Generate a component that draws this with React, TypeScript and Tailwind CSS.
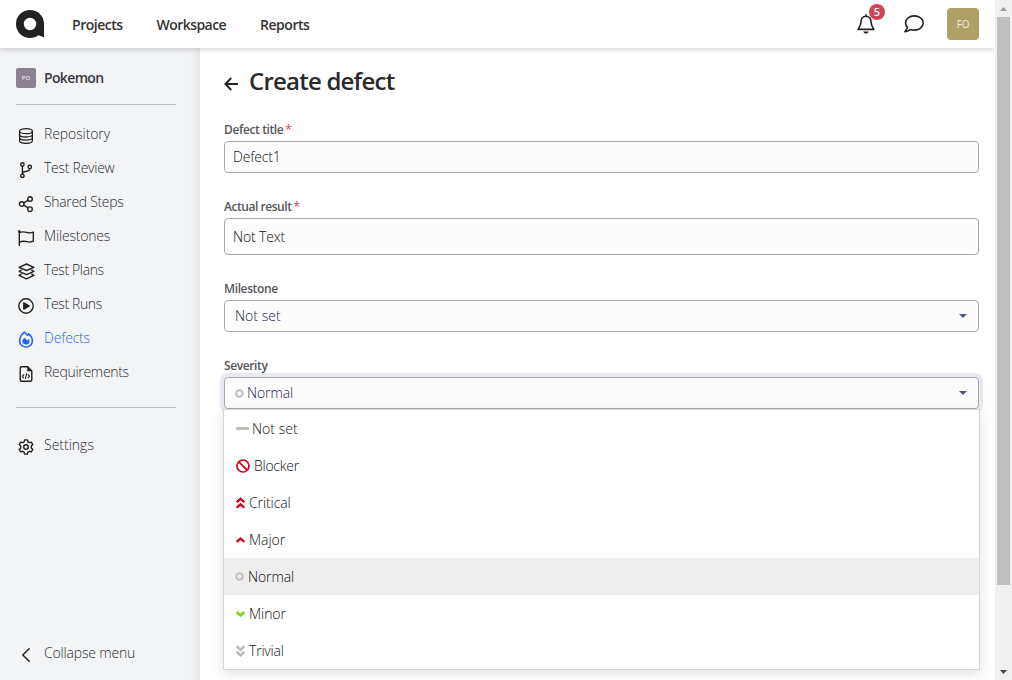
import React from "react";

type IconProps = { className?: string };

const stroke = {
  fill: "none",
  stroke: "currentColor",
  strokeWidth: 1.4,
  strokeLinecap: "round" as const,
  strokeLinejoin: "round" as const,
};

const Logo = () => (
  <svg width="28" height="28" viewBox="0 0 28 28">
    <path
      fill="#222"
      fillRule="evenodd"
      d="M14 0C21.8 0 28 6 28 13.8V27.2L22.4 25.2C20 27 17 28 14 28A14 14 0 0 1 14 0ZM14 7.8A6.2 6.2 0 1 0 14 20.2A6.2 6.2 0 0 0 14 7.8Z"
    />
  </svg>
);

const Bell = () => (
  <svg width="18" height="20" viewBox="0 0 18 20" {...stroke} strokeWidth={1.6}>
    <path d="M9 .8V2.5M9 2.3C5.8 2.3 4 4.6 4 7.6C4 11.5 2.6 13 1.1 15.4H16.9C15.4 13 14 11.5 14 7.6C14 4.6 12.2 2.3 9 2.3Z" />
    <path d="M6.5 17.4H11.5C11.3 18.8 10.2 19.5 9 19.5S6.7 18.8 6.5 17.4Z" fill="currentColor" stroke="none" />
  </svg>
);

const Chat = () => (
  <svg width="20" height="18" viewBox="0 0 20 18" {...stroke} strokeWidth={1.6}>
    <path d="M10.2 .9C5.5 .9 1.6 3.9 1.6 7.9C1.6 9.7 2.3 11.2 3.5 12.4C3.2 14 2 15.3 .9 16.6C3.1 16.7 4.9 15.7 6.1 14.5C7.4 14.9 8.7 15.1 10.2 15.1C15.1 15.1 19.2 12 19.2 8S15.1 .9 10.2 .9Z" />
  </svg>
);

const Database = () => (
  <svg width="16" height="16" viewBox="0 0 16 16" {...stroke} strokeWidth={1.3}>
    <ellipse cx="8" cy="3.2" rx="6.4" ry="2.5" />
    <path d="M1.6 3.2V12.8C1.6 14.3 4.4 15.4 8 15.4S14.4 14.3 14.4 12.8V3.2M1.6 6.4C1.6 7.9 4.4 9 8 9S14.4 7.9 14.4 6.4M1.6 9.6C1.6 11.1 4.4 12.2 8 12.2S14.4 11.1 14.4 9.6" />
  </svg>
);

const Branch = () => (
  <svg width="16" height="16" viewBox="0 0 16 16" {...stroke}>
    <circle cx="4.4" cy="2.5" r="1.7" />
    <circle cx="4.4" cy="13.8" r="1.7" />
    <circle cx="11.8" cy="4.9" r="1.7" />
    <path d="M4.4 4.2V12.1M11.8 6.6C11.8 9.2 9.4 9.3 7.3 9.5C5.8 9.7 4.7 10.3 4.4 11.6" />
  </svg>
);

const Share = () => (
  <svg width="16" height="16" viewBox="0 0 16 16" {...stroke}>
    <circle cx="3.7" cy="8" r="2.3" />
    <circle cx="12" cy="3" r="2.3" />
    <circle cx="12" cy="13.2" r="2.3" />
    <path d="M5.8 6.8L10 4.3M5.8 9.2L10 11.9" />
  </svg>
);

const Flag = () => (
  <svg width="18" height="16" viewBox="0 0 18 16" {...stroke}>
    <path d="M2.3 1V15.3M2.3 2.6C5.6 1.1 8 1.9 10 2.5C12 3.1 14 3 16.3 2.1V11.2C14 12.3 12 12.3 10 11.7C8 11.1 5.6 10.8 2.3 12.2" />
    <circle cx="2.3" cy="1.4" r="1.2" fill="currentColor" stroke="none" />
  </svg>
);

const Layers = () => (
  <svg width="17" height="17" viewBox="0 0 17 17" {...stroke}>
    <path d="M8.5 1L15.9 4.3L8.5 7.5L1.1 4.3ZM3.3 7.2L1.1 8.3L8.5 11.6L15.9 8.3L13.7 7.2M3.3 11.2L1.1 12.4L8.5 15.8L15.9 12.4L13.7 11.2" />
  </svg>
);

const Play = () => (
  <svg width="16" height="16" viewBox="0 0 16 16" {...stroke}>
    <circle cx="8" cy="8" r="7.2" />
    <path d="M5.8 4.9L11.3 8L5.8 11.1Z" fill="currentColor" />
  </svg>
);

const Fire = () => (
  <svg width="16" height="17" viewBox="0 0 16 17" {...stroke} strokeWidth={1.6}>
    <path d="M6.3 1.2C7.5 2.1 8.5 3.1 9.4 4.3C9.8 3.7 10.2 3.2 10.7 2.8C12.8 4.7 14.4 7.5 14.4 9.8C14.4 13.4 11.6 16 8 16S1.6 13.4 1.6 9.7C1.6 7 3.6 3.7 6.3 1.2Z" />
    <path d="M6.7 6.7L9.3 9.5L10.8 8C12.4 10.4 11.4 13.6 8.1 13.6C5.6 13.6 4.2 12.2 4.2 10.3C4.2 9.1 5.3 8.1 6.7 6.7Z" fill="currentColor" stroke="none" />
  </svg>
);

const FileCode = () => (
  <svg width="16" height="16" viewBox="0 0 16 16" {...stroke}>
    <path d="M3.6 .8H9.7L13.8 4.9V13.8C13.8 14.6 13.2 15.3 12.4 15.3H3.6C2.8 15.3 2.2 14.6 2.2 13.8V2.2C2.2 1.4 2.8 .8 3.6 .8Z" />
    <path d="M9.6 1V5H13.6Z" fill="currentColor" strokeWidth=".6" />
    <path d="M5.7 8.6L4.4 10.2L5.7 11.8M10.2 8.6L11.5 10.2L10.2 11.8M8.6 7.9L7.4 12.5" strokeWidth="1.1" />
  </svg>
);

const Gear = () => (
  <svg width="16" height="16" viewBox="0 0 16 16" {...stroke}>
    <path d="M6.6 .9H9.4L9.9 2.9L11.3 3.7L13.3 3.1L14.8 5.6L13.3 7.1V8.9L14.8 10.4L13.3 12.9L11.3 12.3L9.9 13.1L9.4 15.1H6.6L6.1 13.1L4.7 12.3L2.7 12.9L1.2 10.4L2.7 8.9V7.1L1.2 5.6L2.7 3.1L4.7 3.7L6.1 2.9Z" />
    <circle cx="8" cy="8" r="2.3" />
  </svg>
);

const Circle = ({ className }: IconProps) => (
  <svg className={className} width="9" height="9" viewBox="0 0 9 9">
    <circle cx="4.5" cy="4.5" r="3.3" fill="none" stroke="#bdbdbd" strokeWidth="2" />
  </svg>
);

const Caret = () => (
  <svg width="8" height="4" viewBox="0 0 8 4">
    <path d="M0 0H8L4 4Z" fill="#4b5190" />
  </svg>
);

const nav = [
  { label: "Repository", icon: <Database />, track: "tracking-[-0.1px]" },
  { label: "Test Review", icon: <Branch />, track: "tracking-[-0.26px]" },
  { label: "Shared Steps", icon: <Share />, track: "tracking-[-0.32px]" },
  { label: "Milestones", icon: <Flag />, track: "tracking-[-0.18px]" },
  { label: "Test Plans", icon: <Layers />, track: "tracking-[-0.37px]" },
  { label: "Test Runs", icon: <Play />, track: "tracking-[-0.37px]" },
  { label: "Defects", icon: <Fire />, track: "tracking-[-0.2px]", active: true },
  { label: "Requirements", icon: <FileCode />, track: "tracking-[-0.3px]" },
];

function NavItem({ label, icon, track, active }: { label: string; icon: React.ReactNode; track: string; active?: boolean }) {
  return (
    <a className={`flex h-[34px] items-center ${active ? "text-[#1f66fa]" : "text-[#222]"}`}>
      <span className="mt-[3px] flex w-5 shrink-0 justify-center">{icon}</span>
      <span className={`ml-2 whitespace-nowrap ${track} ${active ? "" : "text-[#2c2d30]"}`}>{label}</span>
    </a>
  );
}

const options = [
  {
    label: "Not set",
    gap: "ml-[3px]",
    track: "tracking-[0.02px]",
    icon: <svg width="13" height="3" viewBox="0 0 13 3"><rect width="13" height="3" rx="1" fill="#bdbdbd" /></svg>,
  },
  {
    label: "Blocker",
    gap: "ml-1",
    track: "tracking-[-0.27px]",
    icon: (
      <svg width="14" height="14" viewBox="0 0 14 14" fill="none" stroke="#d0021b" strokeWidth="1.7">
        <circle cx="7" cy="7" r="6" />
        <path d="M2.8 2.8L11.2 11.2" />
      </svg>
    ),
  },
  {
    label: "Critical",
    gap: "ml-1",
    track: "tracking-[-0.1px]",
    icon: (
      <svg width="9" height="12" viewBox="0 0 9 12" fill="none" stroke="#d0021b" strokeWidth="2.3">
        <path d="M.6 5.2L4.5 1.8L8.4 5.2M.6 10.7L4.5 7.3L8.4 10.7" />
      </svg>
    ),
  },
  {
    label: "Major",
    gap: "ml-1",
    track: "tracking-[-0.05px]",
    icon: <svg width="9" height="6" viewBox="0 0 9 6" fill="none" stroke="#d0021b" strokeWidth="2.3"><path d="M.6 5L4.5 1.6L8.4 5" /></svg>,
  },
  { label: "Normal", gap: "ml-1", track: "tracking-[-0.1px]", icon: <Circle className="-ml-px" />, selected: true },
  {
    label: "Minor",
    gap: "ml-1",
    track: "tracking-[-0.05px]",
    icon: <svg width="9" height="6" viewBox="0 0 9 6" fill="none" stroke="#7ed321" strokeWidth="2.6"><path d="M.6 1L4.5 4.4L8.4 1" /></svg>,
  },
  {
    label: "Trivial",
    gap: "ml-1",
    track: "tracking-[-0.2px]",
    icon: (
      <svg width="9" height="12" viewBox="0 0 9 12" fill="none" stroke="#bdbdbd" strokeWidth="2.6">
        <path d="M.6 1.3L4.5 4.7L8.4 1.3M.6 6.8L4.5 10.2L8.4 6.8" />
      </svg>
    ),
  },
];

function Label({ children, required, track }: { children: string; required?: boolean; track: string }) {
  return (
    <label className="flex h-4 items-center whitespace-nowrap text-[12px] leading-4 font-semibold text-[#55565a]">
      <span className={track}>{children}</span>
      {required && <span className="ml-[2px] font-normal text-[#df3c50]">*</span>}
    </label>
  );
}

export default function App() {
  return (
    <div className="flex h-[680px] w-[1012px] overflow-hidden bg-white font-['Open_Sans','Noto_Sans',sans-serif] text-[14px] leading-5 font-light text-[#111]">
      <div className="flex min-w-0 flex-1 flex-col">
        <header className="relative z-10 flex h-12 shrink-0 items-center bg-white pl-4 shadow-[0_1px_6px_rgba(0,0,0,0.2)]">
          <Logo />
          <nav className="ml-7 flex items-center pt-[2px] font-semibold text-[#333]">
            <a className="w-[84.5px] tracking-[-0.47px]">Projects</a>
            <a className="w-[103.5px] tracking-[-0.55px]">Workspace</a>
            <a className="tracking-[-0.47px]">Reports</a>
          </nav>
          <div className="ml-auto flex items-center pr-4 text-[#222]">
            <div className="relative flex">
              <Bell />
              <span className="absolute -top-[10px] left-[12px] flex size-4 items-center justify-center rounded-full bg-[#d14354] text-[11px] leading-4 font-semibold text-white">
                5
              </span>
            </div>
            <div className="ml-[29px]"><Chat /></div>
            <div className="ml-[23px] flex size-8 items-center justify-center rounded-[4px] bg-[#b0a066] text-[10px] font-normal tracking-[-0.2px] text-[#f4f0df]">
              FO
            </div>
          </div>
        </header>

        <div className="flex min-h-0 flex-1">
          <aside className="flex w-[200px] shrink-0 flex-col bg-[linear-gradient(to_right,#f3f4f6_180px,#f0f1f3_191px,#e8e9eb_200px)] px-4 pt-5 pb-[10px]">
            <div className="flex h-5 items-center">
              <span className="flex size-5 items-center justify-center rounded-[2px] bg-[#8d8091] text-[6px] font-normal text-white">PO</span>
              <span className="ml-2 font-semibold tracking-[-0.65px] text-[#38383a]">Pokemon</span>
            </div>
            <div className="mt-4 w-40 border-t border-[#bcbdc0]" />
            <nav className="mt-3 flex flex-col">
              {nav.map((n) => <NavItem key={n.label} {...n} />)}
            </nav>
            <div className="mt-[18px] w-40 border-t border-[#bcbdc0]" />
            <div className="mt-5">
              <NavItem label="Settings" icon={<Gear />} track="tracking-[0px]" />
            </div>
            <div className="mt-auto">
              <NavItem
                label="Collapse menu"
                track="tracking-[-0.18px]"
                icon={<svg width="10" height="14" viewBox="0 0 10 14" {...stroke} strokeWidth={1.5}><path d="M8.2 .8L1.8 7L8.2 13.2" /></svg>}
              />
            </div>
          </aside>

          <main className="flex min-w-0 flex-1 flex-col pt-4 pr-4 pl-6">
            <div className="flex h-9 items-center text-[#222]">
              <svg width="14" height="14" viewBox="0 0 14 14" className="mt-1" fill="none" stroke="currentColor" strokeWidth="1.9">
                <path d="M14 7H1.6M7.2 1L1.4 7L7.2 13" />
              </svg>
              <h1 className="-mt-[2px] ml-[11px] text-[24px] leading-9 font-semibold tracking-[-0.78px] text-[#2a2a2a]">Create defect</h1>
            </div>

            <div className="mt-[22px]">
              <Label required track="tracking-[-0.38px]">Defect title</Label>
              <div className="mt-[3px] flex h-8 items-center rounded-[4px] border border-[#a9a9ab] bg-[#fcfcfc] px-2">
                <span className="tracking-[-0.18px]">Defect1</span>
              </div>
            </div>
            <div className="mt-[26px]">
              <Label required track="tracking-[-0.45px]">Actual result</Label>
              <div className="mt-[3px] flex h-[37px] items-center rounded-[4px] border border-[#a9a9ab] bg-[#fcfcfc] px-2">
                <span className="tracking-[-0.15px]">Not Text</span>
              </div>
            </div>
            <div className="mt-[26px]">
              <Label track="tracking-[-0.38px]">Milestone</Label>
              <div className="mt-[3px] flex h-8 items-center justify-between rounded-[4px] border border-[#a9a9ab] bg-[#fcfcfc] pr-[11px] pl-[10px] text-[#25244d]">
                <span className="tracking-[0.02px]">Not set</span>
                <Caret />
              </div>
            </div>
            <div className="mt-[26px]">
              <Label track="tracking-[-0.38px]">Severity</Label>
              <div className="relative mt-[3px]">
                <div className="flex h-8 items-center rounded-[4px] border border-[#a9a9ab] bg-[#fcfcfc] pr-[11px] pl-[10px] text-[#25244d] shadow-[0_0_0_4px_#e9e9f1]">
                  <Circle className="-ml-[0.5px]" />
                  <span className="ml-[3.5px] flex-1 tracking-[-0.1px]">Normal</span>
                  <Caret />
                </div>
                <ul className="absolute top-8 -right-px -left-px border border-[#d6d6d6] bg-white shadow-[0_4px_12px_rgba(0,0,0,0.12)]">
                  {options.map((o) => (
                    <li key={o.label} className={`flex h-[37px] items-center pl-3 ${o.selected ? "bg-[#eee]" : ""}`}>
                      {o.icon}
                      <span className={`${o.gap} ${o.track}`}>{o.label}</span>
                    </li>
                  ))}
                </ul>
              </div>
            </div>
          </main>
        </div>
      </div>

      <div className="z-20 flex w-[17px] shrink-0 flex-col items-center bg-[#f0f0f0]">
        <div className="flex h-[17px] items-center">
          <svg width="7" height="4" viewBox="0 0 7 4"><path d="M0 4H7L3.5 0Z" fill="#9a9a9a" /></svg>
        </div>
        <div className="h-[568px] w-[13px] bg-[#c0c0c0]" />
        <div className="mt-auto flex h-[17px] items-center">
          <svg width="7" height="4" viewBox="0 0 7 4"><path d="M0 0H7L3.5 4Z" fill="#444" /></svg>
        </div>
      </div>
    </div>
  );
}
